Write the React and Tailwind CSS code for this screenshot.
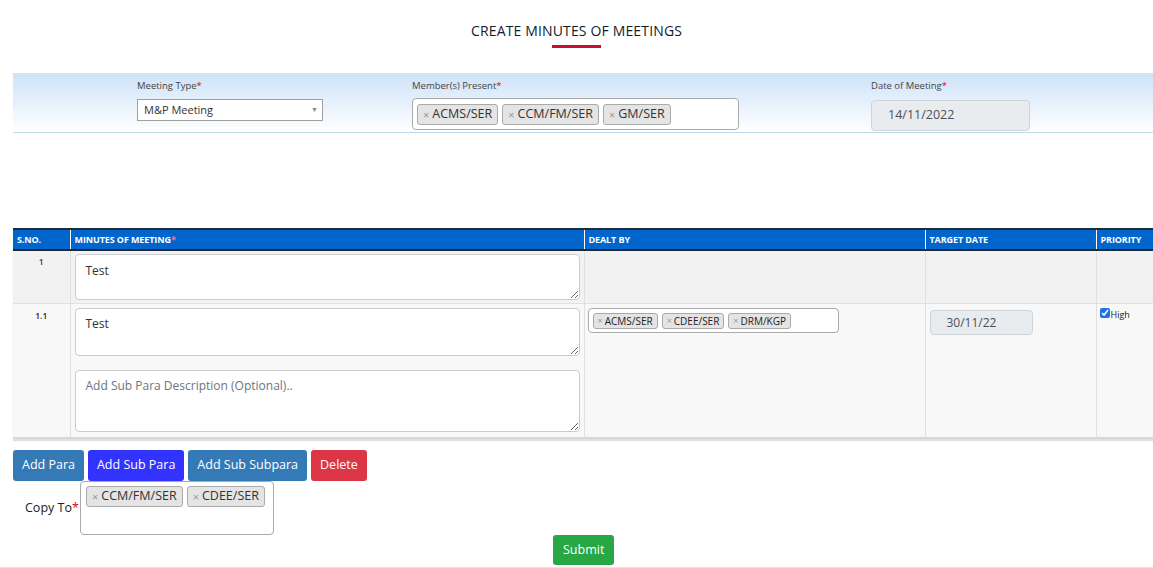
import React from "react";

const font = { fontFamily: '"Open Sans", "Noto Sans", sans-serif' };

function Tag({ label, small }) {
  return (
    <span
      className={
        small
          ? "inline-flex items-center h-[16px] px-[4px] border border-[#aaaaaa] bg-[#e4e4e4] rounded-[3px] text-[10px] leading-none text-[#222]"
          : "inline-flex items-center h-[21px] px-[5px] border border-[#aaaaaa] bg-[#e4e4e4] rounded-[3px] text-[12.5px] leading-none text-[#333]"
      }
    >
      <span className={small ? "text-[#999] mr-[2px] text-[9px]" : "text-[#999] mr-[3px] text-[11px]"}>×</span>
      {label}
    </span>
  );
}

function Req() {
  return <span className="text-[#e00000]">*</span>;
}

export default function App() {
  return (
    <div className="w-[1153px] h-[568px] overflow-hidden bg-white text-[#333]" style={font}>
      {/* Title */}
      <div className="flex flex-col items-center pt-[21px]">
        <h1 className="text-[14px] font-medium text-[#141c2b] leading-[20px] tracking-[0.15px]">
          CREATE MINUTES OF MEETINGS
        </h1>
        <div className="w-[49px] h-[3px] bg-[#c8102e] mt-[4px]" />
      </div>

      {/* Filter band */}
      <div className="ml-[13px] mt-[25px] h-[60px] bg-gradient-to-b from-[#cde2f8] to-[#ffffff] border-b border-[#bcd6ea] flex">
        <div className="ml-[124px] w-[186px] pt-[6px]">
          <div className="text-[9.5px] leading-[13px] text-[#444]">
            Meeting Type<Req />
          </div>
          <div className="mt-[7px] h-[22px] border border-[#a0a0a0] bg-white flex items-center justify-between pl-[6px] pr-[4px]">
            <span className="text-[11px] text-[#333]">M&amp;P Meeting</span>
            <span className="text-[7px] text-[#888]">▼</span>
          </div>
        </div>
        <div className="ml-[89px] w-[327px] pt-[6px]">
          <div className="text-[9.5px] leading-[13px] text-[#444]">
            Member(s) Present<Req />
          </div>
          <div className="mt-[6px] h-[32px] border border-[#aaaaaa] rounded-[4px] bg-white flex items-center gap-[4px] pl-[4px]">
            <Tag label="ACMS/SER" />
            <Tag label="CCM/FM/SER" />
            <Tag label="GM/SER" />
          </div>
        </div>
        <div className="ml-[132px] w-[159px] pt-[6px]">
          <div className="text-[9.5px] leading-[13px] text-[#444]">
            Date of Meeting<Req />
          </div>
          <div className="mt-[8px] h-[31px] border border-[#ced4da] rounded-[4px] bg-[#e9ecef] flex items-center pl-[16px] text-[12.5px] text-[#495057]">
            14/11/2022
          </div>
        </div>
      </div>

      {/* Table */}
      <div className="ml-[13px] mt-[95px] w-[1160px] shadow-[0_2px_1px_rgba(0,0,0,0.12)] border-b-2 border-[#d8d8dc]">
        <table className="border-collapse table-fixed w-[1160px]">
          <colgroup>
            <col className="w-[57px]" />
            <col className="w-[514px]" />
            <col className="w-[341px]" />
            <col className="w-[171px]" />
            <col className="w-[77px]" />
          </colgroup>
          <thead>
            <tr className="bg-[#0066cc] h-[21px] border-t-2 border-b-2 border-[#1a2b3c]">
              {[
                ["S.NO.", false],
                ["MINUTES OF MEETING", true],
                ["DEALT BY", false],
                ["TARGET DATE", false],
                ["PRIORITY", false],
              ].map(([h, r], i) => (
                <th
                  key={h}
                  className={
                    "text-left align-middle px-[4px] text-[9px] font-bold text-white tracking-[-0.1px] " +
                    (i > 0 ? "border-l border-white" : "")
                  }
                >
                  {h}
                  {r && <span className="text-[#ff6a8a]">*</span>}
                </th>
              ))}
            </tr>
          </thead>
          <tbody>
            <tr className="bg-[#f2f2f2] h-[52px]">
              <td className="align-top text-center pt-[5px] text-[8.5px] font-semibold text-[#3a2a6a] border-r border-[#e0e0e0]">
                1
              </td>
              <td className="align-top px-[4px] pt-[3px] pb-[3px] border-r border-[#e0e0e0]">
                <textarea
                  defaultValue="Test"
                  className="block w-full h-[46px] bg-white border border-[#cccccc] rounded-[4px] px-[10px] pt-[7px] text-[12px] text-[#333] resize-y outline-none"
                />
              </td>
              <td className="border-r border-[#e0e0e0]" />
              <td className="border-r border-[#e0e0e0]" />
              <td />
            </tr>
            <tr className="bg-[#f8f8f8] border-t border-[#e0e0e0]">
              <td className="align-top text-center pt-[6px] text-[8.5px] font-semibold text-[#222] border-r border-[#e0e0e0]">
                1.1
              </td>
              <td className="align-top px-[4px] pt-[4px] pb-[5px] border-r border-[#e0e0e0]">
                <textarea
                  defaultValue="Test"
                  className="block w-full h-[48px] bg-white border border-[#cccccc] rounded-[4px] px-[10px] pt-[6px] text-[12px] text-[#333] resize-y outline-none"
                />
                <textarea
                  placeholder="Add Sub Para Description (Optional).."
                  className="block mt-[14px] w-full h-[62px] bg-white border border-[#cccccc] rounded-[4px] px-[10px] pt-[6px] text-[12px] text-[#333] placeholder:text-[#6c757d] resize-y outline-none"
                />
              </td>
              <td className="align-top px-[3px] pt-[4px] border-r border-[#e0e0e0]">
                <div className="w-[251px] h-[25px] border border-[#aaaaaa] rounded-[4px] bg-white flex items-center gap-[4px] pl-[4px]">
                  <Tag small label="ACMS/SER" />
                  <Tag small label="CDEE/SER" />
                  <Tag small label="DRM/KGP" />
                </div>
              </td>
              <td className="align-top pl-[4px] pt-[6px] border-r border-[#e0e0e0]">
                <div className="w-[103px] h-[25px] border border-[#ced4da] rounded-[4px] bg-[#e9ecef] flex items-center pl-[16px] text-[12px] text-[#495057]">
                  30/11/22
                </div>
              </td>
              <td className="align-top pl-[3px] pt-[4px]">
                <label className="flex items-start text-[9px] text-[#222] leading-[12px]">
                  <input
                    type="checkbox"
                    defaultChecked
                    className="w-[10px] h-[10px] m-0 accent-[#1a73e8]"
                  />
                  <span className="ml-[1px] mt-[1px]">High</span>
                </label>
              </td>
            </tr>
          </tbody>
        </table>
      </div>

      {/* Buttons */}
      <div className="ml-[13px] mt-[11px] flex gap-[4px]">
        <button className="h-[31px] px-[9px] bg-[#337ab7] text-white text-[12.5px] rounded-[3px]">Add Para</button>
        <button className="h-[31px] px-[9px] bg-[#3333ff] text-white text-[12.5px] rounded-[3px]">Add Sub Para</button>
        <button className="h-[31px] px-[9px] bg-[#337ab7] text-white text-[12.5px] rounded-[3px]">Add Sub Subpara</button>
        <button className="h-[31px] px-[9px] bg-[#dc3545] text-white text-[12.5px] rounded-[3px]">Delete</button>
      </div>

      {/* Copy To */}
      <div className="ml-[25px] flex items-center">
        <div className="w-[55px] text-[12.5px] text-[#222]">
          Copy To<Req />
        </div>
        <div className="w-[194px] h-[54px] border border-[#aaaaaa] rounded-[4px] bg-white pt-[4px] pl-[5px] flex items-start gap-[4px]">
          <Tag label="CCM/FM/SER" />
          <Tag label="CDEE/SER" />
        </div>
      </div>

      {/* Submit */}
      <div className="flex ml-[553px]">
        <button className="h-[30px] px-[10px] bg-[#28a745] text-white text-[12.5px] rounded-[3px]">Submit</button>
      </div>
      <div className="mt-[2px] h-px bg-[#e5e5e5]" />
    </div>
  );
}
